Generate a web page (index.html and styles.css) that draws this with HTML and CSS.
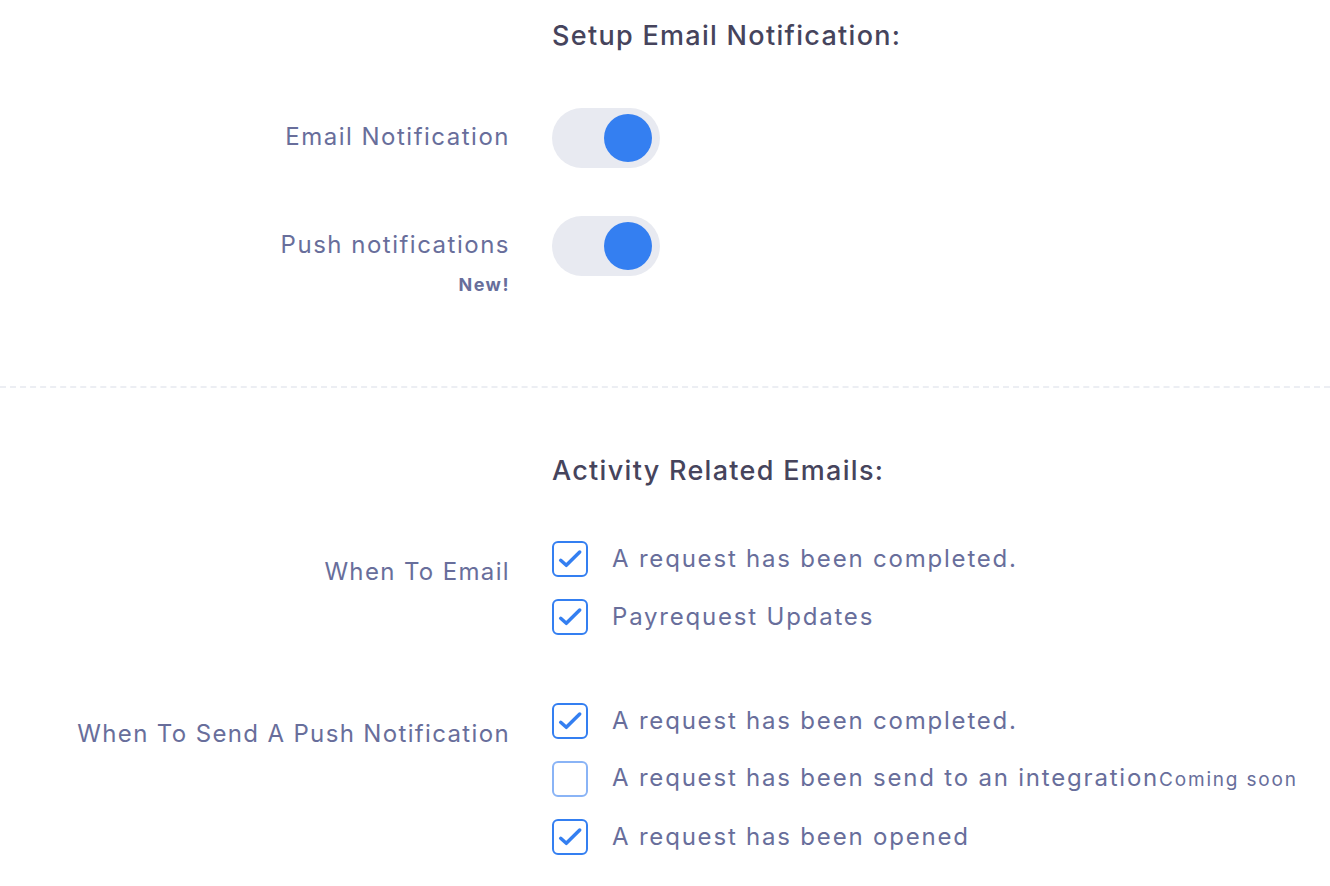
FILE: index.html
```html
<!DOCTYPE html>
<html lang="en">
<head>
<meta charset="utf-8">
<title>Notification settings</title>
<link rel="stylesheet" href="styles.css">
</head>
<body>
<main class="page">
  <section class="section section-top">
    <div class="row heading-row">
      <div class="label"></div>
      <h2 class="heading">Setup Email Notification:</h2>
    </div>
    <div class="row toggle-row">
      <div class="label">Email Notification</div>
      <div class="toggle on"><span class="knob"></span></div>
    </div>
    <div class="row toggle-row">
      <div class="label">Push notifications<span class="new">New!</span></div>
      <div class="toggle on"><span class="knob"></span></div>
    </div>
  </section>

  <hr class="divider">

  <section class="section section-bottom">
    <div class="row heading-row">
      <div class="label"></div>
      <h2 class="heading">Activity Related Emails:</h2>
    </div>
    <div class="row group-row">
      <div class="label group-label">When To Email</div>
      <ul class="checks">
        <li class="check"><span class="box checked"><svg viewBox="0 0 32 32"><path d="M6.7 17.3l5.6 5 13.4-13.3"/></svg></span><span class="check-text">A request has been completed.</span></li>
        <li class="check"><span class="box checked"><svg viewBox="0 0 32 32"><path d="M6.7 17.3l5.6 5 13.4-13.3"/></svg></span><span class="check-text">Payrequest Updates</span></li>
      </ul>
    </div>
    <div class="row group-row">
      <div class="label group-label">When To Send A Push Notification</div>
      <ul class="checks">
        <li class="check"><span class="box checked"><svg viewBox="0 0 32 32"><path d="M6.7 17.3l5.6 5 13.4-13.3"/></svg></span><span class="check-text">A request has been completed.</span></li>
        <li class="check"><span class="box disabled"></span><span class="check-text">A request has been send to an integration<span class="soon">Coming soon</span></span></li>
        <li class="check"><span class="box checked"><svg viewBox="0 0 32 32"><path d="M6.7 17.3l5.6 5 13.4-13.3"/></svg></span><span class="check-text">A request has been opened</span></li>
      </ul>
    </div>
  </section>
</main>
</body>
</html>
```
FILE: styles.css
```css
* { box-sizing: border-box; }
html, body { margin: 0; padding: 0; background: #ffffff; }
body {
  font-family: Inter, "Open Sans", "Liberation Sans", sans-serif;
  color: #686e9b;
}
.page { width: 1330px; }
.section-top { padding-top: 18px; padding-bottom: 90px; }
.section-bottom { padding-top: 65px; }
.row {
  display: grid;
  grid-template-columns: 510px 1fr;
  column-gap: 42px;
}
.label {
  text-align: right;
  font-size: 24px;
  line-height: 32px;
  letter-spacing: 1.5px;
  color: #686e9b;
}
.group-label { letter-spacing: 1.35px; }
.heading {
  margin: 0;
  font-size: 27px;
  line-height: 36px;
  font-weight: 500;
  letter-spacing: 1.3px;
  color: #46445c;
}
.toggle-row { margin-top: 54px; align-items: start; }
.toggle-row + .toggle-row { margin-top: 48px; }
.toggle-row .label { padding-top: 13px; }
.new {
  display: block;
  font-size: 18px;
  font-weight: 700;
  line-height: 22px;
  letter-spacing: 1.5px;
  margin-top: 13px;
}
.toggle {
  width: 108px;
  height: 60px;
  border-radius: 30px;
  background: #e8eaf1;
  display: flex;
  align-items: center;
  padding: 0 8px;
}
.toggle.on { justify-content: flex-end; }
.knob {
  width: 48px;
  height: 48px;
  border-radius: 50%;
  background: #347ff1;
}
.divider {
  margin: 0;
  border: 0;
  border-top: 2px dashed #eceef3;
  height: 0;
}
.heading-row + .group-row { margin-top: 41px; }
.group-row + .group-row { margin-top: 46px; }
.group-label { padding-top: 26px; }
.checks { list-style: none; margin: 0; padding: 0; }
.check {
  display: flex;
  align-items: center;
  height: 58px;
}
.box {
  flex: none;
  width: 36px;
  height: 36px;
  border: 2px solid #347ff1;
  border-radius: 6px;
  margin-right: 24px;
  display: flex;
}
.box svg { width: 32px; height: 32px; }
.box svg path {
  fill: none;
  stroke: #347ff1;
  stroke-width: 3.5;
  stroke-linecap: round;
  stroke-linejoin: round;
}
.box.disabled { border-color: #8ab4f6; }
.check-text {
  font-size: 24px;
  line-height: 32px;
  letter-spacing: 1.8px;
  color: #686e9b;
}
.soon { font-size: 19px; letter-spacing: 1.8px; }
```
